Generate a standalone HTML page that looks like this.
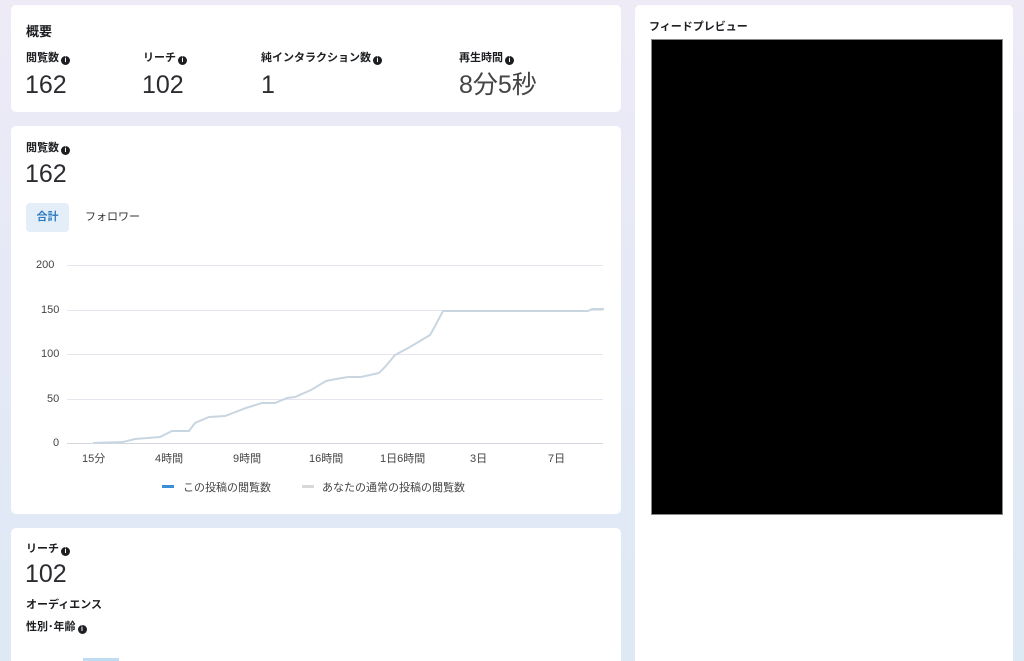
<!DOCTYPE html>
<html><head><meta charset="utf-8"><style>
*{margin:0;padding:0;box-sizing:border-box}
html,body{width:1024px;height:661px;overflow:hidden}
body{position:relative;background:linear-gradient(180deg,#eeebf6 0%,#e6e9f5 40%,#dde9f5 100%);font-family:"Liberation Sans","Noto Sans CJK JP",sans-serif;color:#1c1e21}
.card{position:absolute;background:#fff;border-radius:5px}
.t{position:absolute;font-size:11px;font-weight:bold;color:#1c1e21;white-space:nowrap;line-height:13px}
.n{position:absolute;font-size:25px;line-height:26px;color:#2a2c30;white-space:nowrap;font-weight:normal}
.i{display:inline-block;width:9px;height:9px;border-radius:50%;background:#1c1e21;color:#fff;font-size:7px;line-height:9px;text-align:center;vertical-align:-1px;margin-left:2px;font-weight:bold}
.ax{position:absolute;font-size:11px;color:#444;white-space:nowrap}
</style></head><body>
<div class="card" style="left:11px;top:5px;width:610px;height:107px">
 <div class="t" style="left:15px;top:19px;font-size:13px;line-height:15px">概要</div>
 <div class="t" style="left:15px;top:47px">閲覧数<span class="i">i</span></div>
 <div class="n" style="left:14px;top:67px">162</div>
 <div class="t" style="left:132px;top:47px">リーチ<span class="i">i</span></div>
 <div class="n" style="left:131px;top:67px">102</div>
 <div class="t" style="left:250px;top:47px">純インタラクション数<span class="i">i</span></div>
 <div class="n" style="left:250px;top:67px">1</div>
 <div class="t" style="left:448px;top:47px">再生時間<span class="i">i</span></div>
 <div class="n" style="left:448px;top:67px;color:#444">8分5秒</div>
</div>
<div class="card" style="left:11px;top:126px;width:610px;height:388px">
 <div class="t" style="left:15px;top:16px">閲覧数<span class="i">i</span></div>
 <div class="n" style="left:14px;top:35px">162</div>
 <div style="position:absolute;left:15px;top:77px;width:43px;height:29px;background:#e3eef8;border-radius:4px;color:#2d7cc0;font-size:11px;font-weight:bold;text-align:center;line-height:29px">合計</div>
 <div style="position:absolute;left:74px;top:77px;font-size:11px;line-height:29px;color:#333">フォロワー</div>
</div>
<svg style="position:absolute;left:0;top:0" width="640" height="520">
 <g stroke="#e8e3ec" stroke-width="1">
  <line x1="67" y1="265.5" x2="603" y2="265.5"/><line x1="67" y1="310.5" x2="603" y2="310.5"/><line x1="67" y1="354.5" x2="603" y2="354.5"/><line x1="67" y1="399.5" x2="603" y2="399.5"/>
 </g>
 <line x1="67" y1="443.5" x2="603" y2="443.5" stroke="#d4d8de"/>
 <polyline fill="none" stroke="#c8d6e2" stroke-width="2" points="93,443 123,442 135,439 160,437 172,431 189,431 195,423 209,417 225,416 246,408 262,403 275,403 287,398 295,397 311,390 326,381 336,379 348,377 361,377 379,373 385,367 395,355 410,347 430,335 434,328 443,311 588,311 592,309 604,309"/>
 <rect x="162" y="485" width="12" height="3" fill="#3a8fd6"/>
 <rect x="302" y="485" width="12" height="3" fill="#d8d8d8"/>
</svg>
<div class="ax" style="left:36px;top:259px">200</div>
<div class="ax" style="left:41px;top:304px">150</div>
<div class="ax" style="left:41px;top:348px">100</div>
<div class="ax" style="left:47px;top:393px">50</div>
<div class="ax" style="left:53px;top:437px">0</div>
<div class="ax" style="left:82px;top:450px">15分</div>
<div class="ax" style="left:155px;top:450px">4時間</div>
<div class="ax" style="left:233px;top:450px">9時間</div>
<div class="ax" style="left:309px;top:450px">16時間</div>
<div class="ax" style="left:380px;top:450px">1日6時間</div>
<div class="ax" style="left:470px;top:450px">3日</div>
<div class="ax" style="left:548px;top:450px">7日</div>
<div class="ax" style="left:183px;top:479px">この投稿の閲覧数</div>
<div class="ax" style="left:322px;top:479px">あなたの通常の投稿の閲覧数</div>
<div class="card" style="left:11px;top:528px;width:610px;height:140px">
 <div class="t" style="left:15px;top:15px">リーチ<span class="i">i</span></div>
 <div class="n" style="left:14px;top:33px">102</div>
 <div class="t" style="left:15px;top:71px">オーディエンス</div>
 <div class="t" style="left:15px;top:93px">性別･年齢<span class="i">i</span></div>
 <div style="position:absolute;left:72px;top:130px;width:36px;height:3px;background:#bfdcf0"></div>
</div>
<div class="card" style="left:635px;top:5px;width:378px;height:670px">
 <div class="t" style="left:14px;top:16px">フィードプレビュー</div>
 <div style="position:absolute;left:16px;top:34px;width:352px;height:476px;background:#000;border:1px solid #888"></div>
</div>
</body></html>
